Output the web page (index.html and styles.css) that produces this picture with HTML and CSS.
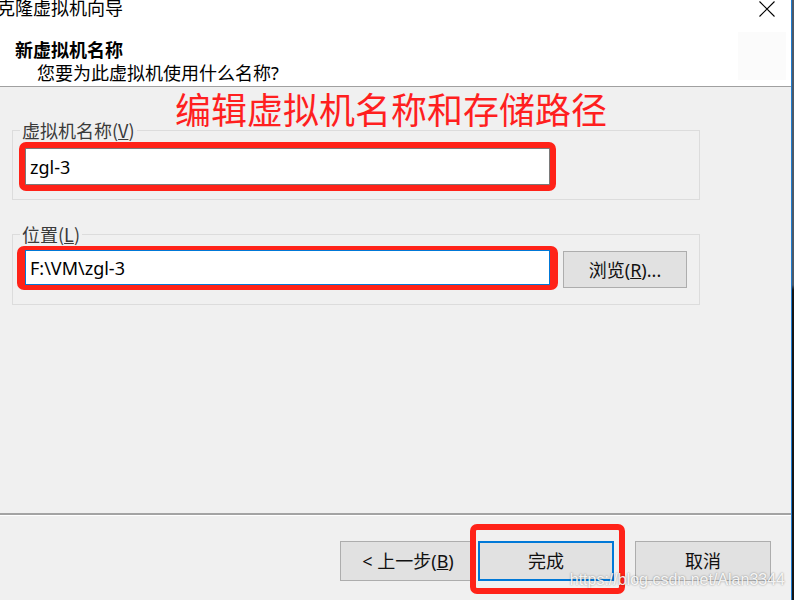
FILE: index.html
```html
<!DOCTYPE html>
<html lang="zh-CN">
<head>
<meta charset="utf-8">
<title>克隆虚拟机向导</title>
<link rel="stylesheet" href="styles.css">
</head>
<body>
<div class="dialog">
  <div class="header">
    <div class="htext">
      <div class="title">克隆虚拟机向导</div>
      <div class="heading">新虚拟机名称</div>
      <div class="sub">您要为此虚拟机使用什么名称?</div>
    </div>
    <div class="hside">
      <svg class="close" width="16" height="16" viewBox="0 0 16 16"><path d="M0.5 0.5 L15.5 15.5 M15.5 0.5 L0.5 15.5" stroke="#000" stroke-width="1.1" fill="none"/></svg>
      <div class="logo"></div>
    </div>
  </div>
  <div class="content">
    <div class="note">编辑虚拟机名称和存储路径</div>
    <fieldset class="group">
      <legend>虚拟机名称(<u>V</u>)</legend>
      <div class="field mark1"><input class="input" type="text" value="zgl-3"></div>
    </fieldset>
    <fieldset class="group group2">
      <legend>位置(<u>L</u>)</legend>
      <div class="row">
        <div class="field2 mark2"><input class="input input2" type="text" value="F:\VM\zgl-3"></div>
        <div class="btn browse">浏览(<u>R</u>)...</div>
      </div>
    </fieldset>
  </div>
  <div class="sep"></div>
  <div class="footer">
    <div class="btn back">&lt; 上一步(<u>B</u>)</div>
    <div class="btn finish">完成</div>
    <div class="btn cancel">取消</div>
    <div class="watermark">https://blog.csdn.net/Alan3344</div>
  </div>
</div>
<div class="edge"></div>
</body>
</html>
```
FILE: styles.css
```css
html, body {
  margin: 0;
  padding: 0;
}
body {
  width: 794px;
  height: 600px;
  overflow: hidden;
  display: flex;
  background: #f0f0f0;
  font-family: "Noto Sans", "Noto Sans CJK SC", sans-serif;
  font-size: 18px;
  color: #000;
}
.dialog {
  flex: 1;
  display: flex;
  flex-direction: column;
  min-width: 0;
}
.header {
  height: 86px;
  background: #fff;
  border-bottom: 1px solid #a0a0a0;
  display: flex;
  flex: none;
}
.htext {
  flex: 1;
}
.title {
  line-height: 18px;
  margin: -1px 0 0 -3px;
}
.heading {
  font-weight: bold;
  line-height: 18px;
  margin-top: 24px;
  padding-left: 15px;
}
.sub {
  line-height: 18px;
  margin-top: 5px;
  padding-left: 37px;
}
.hside {
  display: flex;
  flex-direction: column;
  align-items: flex-end;
  padding-right: 5px;
}
.close {
  display: block;
  margin-top: 1px;
  margin-right: 11px;
}
.logo {
  width: 48px;
  height: 48px;
  margin-top: 15px;
  background: #fbfbfb;
}
.content {
  flex: 1;
  min-height: 0;
}
.note {
  font-family: "Noto Sans CJK SC", sans-serif;
  font-size: 36px;
  line-height: 36px;
  color: #ff1f1f;
  padding-left: 175px;
  margin-top: 3px;
  margin-bottom: -5px;
}
.group {
  margin: 0 0 0 12px;
  padding: 0;
  width: 688px;
  box-sizing: border-box;
  border: 1px solid #dcdcdc;
  min-inline-size: 0;
}
.group legend {
  padding: 0 2px;
  margin-left: 7px;
  line-height: 18px;
  color: #3a3a3a;
  font-family: "Noto Sans CJK SC", sans-serif;
}
.group2 {
  margin-top: 25px;
}
.field {
  position: relative;
  width: 525px;
  margin: 9px 0 14px 12px;
}
.input {
  display: block;
  width: 525px;
  height: 37px;
  box-sizing: border-box;
  border: 1px solid #7a7a7a;
  background: #fff;
  padding: 0 4px;
  margin: 0;
  font-family: "Noto Sans", "Noto Sans CJK SC", sans-serif;
  font-size: 18px;
  color: #000;
  outline: none;
}
.mark1::after {
  content: "";
  position: absolute;
  inset: -6px;
  border: 6px solid #ff2218;
  border-radius: 7px;
}
.row {
  display: flex;
  align-items: flex-start;
  gap: 13px;
  margin: 7px 0 16px 12px;
}
.field2 {
  position: relative;
  width: 525px;
}
.input2 {
  height: 35px;
  border-color: #0078d7;
}
.mark2::after {
  content: "";
  position: absolute;
  inset: -4px -8px -5px -8px;
  border-style: solid;
  border-color: #ff2218;
  border-width: 4px 8px 5px 8px;
  border-radius: 7px;
}
.btn {
  box-sizing: border-box;
  background: #e1e1e1;
  border: 1px solid #adadad;
  display: flex;
  align-items: center;
  justify-content: center;
  line-height: 18px;
  color: #111;
}
.browse {
  width: 124px;
  height: 37px;
  margin-top: 1px;
}
.sep {
  flex: none;
  border-top: 2px solid #a3a3a3;
  border-bottom: 1px solid #fff;
}
.footer {
  flex: none;
  height: 84px;
  box-sizing: border-box;
  padding: 25px 20px 0 0;
  display: flex;
  justify-content: flex-end;
  align-items: flex-start;
  position: relative;
}
.footer .btn {
  width: 136px;
  height: 40px;
}
.back {
  margin-right: 2px;
}
.finish {
  position: relative;
  border: 2px solid #0078d7 !important;
  margin-right: 21px;
}
.finish::after {
  content: "";
  position: absolute;
  top: -19px;
  left: -10px;
  right: -13px;
  bottom: -15px;
  border: 6px solid #ff2218;
  border-radius: 7px;
}
.watermark {
  position: absolute;
  right: 6px;
  top: 56px;
  font-family: "Liberation Sans", sans-serif;
  font-size: 16px;
  line-height: 16px;
  color: rgba(255, 255, 255, 0.9);
  text-shadow: 0 0 2px rgba(0, 0, 0, 0.45);
}
.edge {
  width: 2px;
  flex: none;
  border-left: 1px solid #1e7bd0;
  background: linear-gradient(#4c5a6a 0, #4c5a6a 285px, #151515 290px, #151515 100%);
}
```
